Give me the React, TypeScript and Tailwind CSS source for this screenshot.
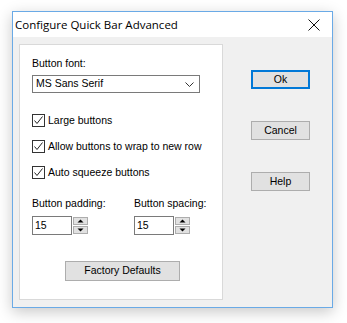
import React from "react";

const font = { fontFamily: '"Liberation Sans", Arial, sans-serif' };

function Check({ label }: { label: string }) {
  return (
    <div className="flex h-[13px] items-center gap-[3px]">
      <div className="flex h-[13px] w-[13px] items-center justify-center border border-[#333] bg-white">
        <svg width="11" height="11" viewBox="0 0 11 11">
          <path d="M1.5 5.5 L4 8.5 L9.5 1.5" fill="none" stroke="#222" strokeWidth="1" />
        </svg>
      </div>
      <span className="whitespace-nowrap text-[10.5px] leading-[13px] text-black">{label}</span>
    </div>
  );
}

function Spin({ value }: { value: string }) {
  return (
    <div className="flex h-[19px]">
      <div className="flex h-[19px] w-[40px] items-center border border-[#7a7a7a] bg-white pl-[2px] text-[10.5px] text-black">
        {value}
      </div>
      <div className="ml-[1px] flex w-[15px] flex-col justify-between py-[1px]">
        <div className="flex h-[8px] items-center justify-center border border-[#adadad] bg-[#e1e1e1]">
          <svg width="7" height="4" viewBox="0 0 7 4">
            <path d="M0.5 3.5 L3.5 0.5 L6.5 3.5 Z" fill="#000" />
          </svg>
        </div>
        <div className="flex h-[8px] items-center justify-center border border-[#adadad] bg-[#e1e1e1]">
          <svg width="7" height="4" viewBox="0 0 7 4">
            <path d="M0.5 0.5 L3.5 3.5 L6.5 0.5 Z" fill="#000" />
          </svg>
        </div>
      </div>
    </div>
  );
}

function SpinField({ label, value, width }: { label: string; value: string; width: string }) {
  return (
    <div className={`flex flex-col gap-[6px] ${width}`}>
      <span className="h-[13px] whitespace-nowrap text-[10.5px] leading-[13px] text-black">{label}</span>
      <Spin value={value} />
    </div>
  );
}

function Btn({ label, focused = false }: { label: string; focused?: boolean }) {
  return (
    <div
      className={
        focused
          ? "flex h-[19px] w-[59px] items-center justify-center border-2 border-[#0078d7] bg-[#e1e1e1] text-[10.5px] text-black"
          : "flex h-[19px] w-[59px] items-center justify-center border border-[#adadad] bg-[#e1e1e1] text-[10.5px] text-black"
      }
    >
      {label}
    </div>
  );
}

export default function App() {
  return (
    <div className="h-[323px] w-[347px] bg-white pl-[12px] pt-[11px]" style={font}>
      <div className="flex h-[297px] w-[321px] flex-col border border-[#6aaae6] bg-[#f0f0f0] shadow-[0_4px_14px_rgba(0,0,0,0.22)]">
        <div className="flex h-[25px] items-center justify-between bg-white pl-[2px] pr-[12px]">
          <span className="text-[11.5px] text-black" style={{ fontFamily: '"Open Sans", "Noto Sans", sans-serif' }}>
            Configure Quick Bar Advanced
          </span>
          <svg width="12" height="12" viewBox="0 0 12 12">
            <path d="M0.5 0.5 L11.5 11.5 M11.5 0.5 L0.5 11.5" stroke="#111" strokeWidth="1" />
          </svg>
        </div>
        <div className="flex pl-[6px] pt-[7px]">
          <div className="flex h-[256px] w-[204px] flex-col border border-[#d9d9d9] bg-white pl-[12px] pt-[12px]">
            <span className="h-[13px] text-[10.5px] leading-[13px] text-black">Button font:</span>
            <div className="mt-[5px] flex h-[18px] w-[168px] items-center justify-between border border-[#7a7a7a] bg-white pl-[3px] pr-[5px] text-[10.5px] text-black">
              <span>MS Sans Serif</span>
              <svg width="9" height="5" viewBox="0 0 9 5">
                <path d="M0.5 0.5 L4.5 4.5 L8.5 0.5" fill="none" stroke="#333" strokeWidth="1" />
              </svg>
            </div>
            <div className="mt-[21px] flex flex-col gap-[13px]">
              <Check label="Large buttons" />
              <Check label="Allow buttons to wrap to new row" />
              <Check label="Auto squeeze buttons" />
            </div>
            <div className="mt-[18px] flex">
              <SpinField label="Button padding:" value="15" width="w-[102px]" />
              <SpinField label="Button spacing:" value="15" width="w-[80px]" />
            </div>
            <div className="ml-[33px] mt-[26px] flex h-[20px] w-[115px] items-center justify-center border border-[#adadad] bg-[#e1e1e1] text-[10.5px] text-black">
              Factory Defaults
            </div>
          </div>
          <div className="ml-[28px] mt-[26px] flex flex-col gap-[32px]">
            <Btn label="Ok" focused />
            <Btn label="Cancel" />
            <Btn label="Help" />
          </div>
        </div>
      </div>
    </div>
  );
}
